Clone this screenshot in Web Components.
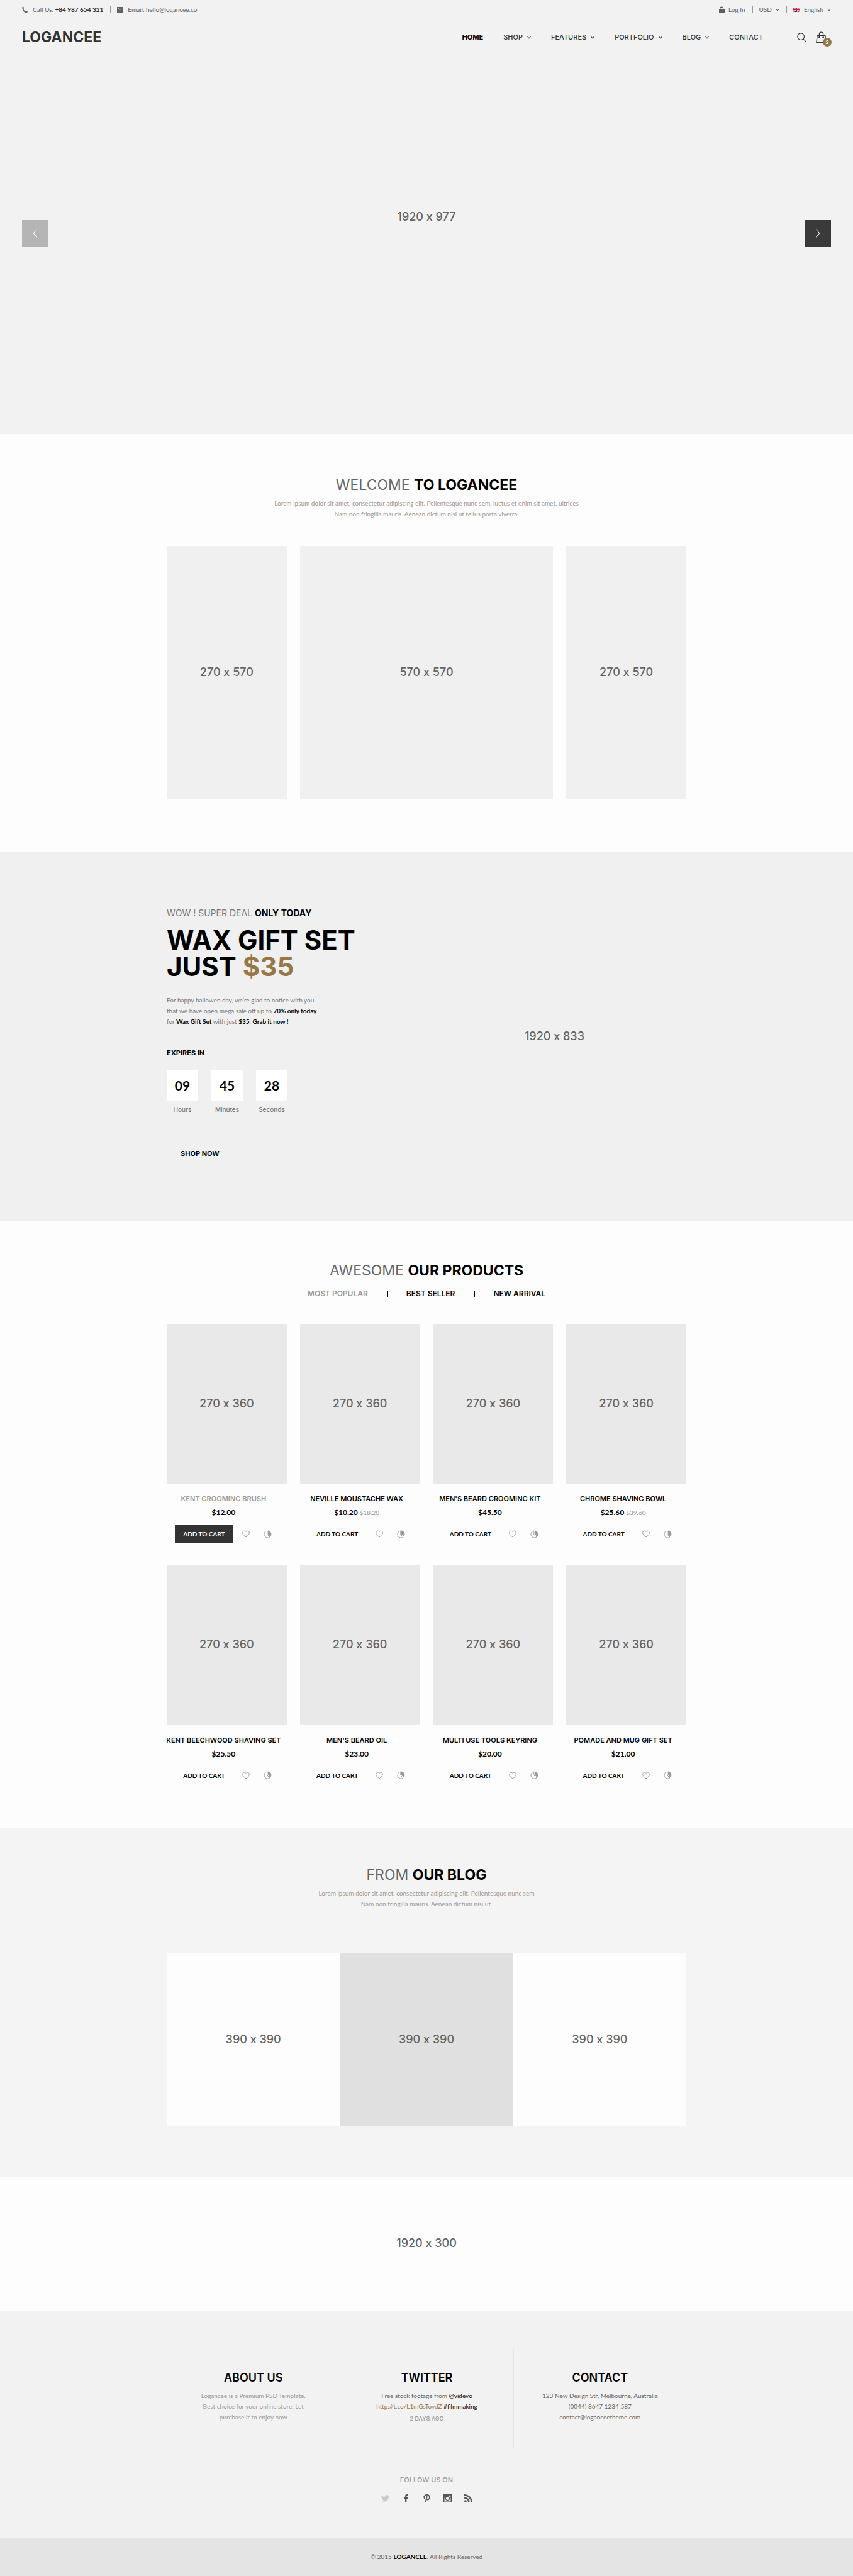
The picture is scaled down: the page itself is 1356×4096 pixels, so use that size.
<!DOCTYPE html>
<html lang="en">
<head>
<meta charset="utf-8">
<title>Logancee</title>
<meta name="viewport" content="width=device-width, initial-scale=1">
<style>
:root{
  --display:Inter,"Liberation Sans",sans-serif;
  --body:Lato,"Liberation Sans",sans-serif;
  --ink:#000;--dark:#333;--mid:#666;--soft:#999;--gold:#967848;
  --wrap:826px;
}
body{margin:0;min-height:100vh;display:flex;flex-direction:column;background:#fdfdfd;font:10px/17px var(--body);color:var(--mid)}
</style>
</head>
<body>
<top-stage></top-stage>

<page-section style="--top:67px;--bottom:83px">
  <section-heading slot="head" lead="Welcome" strong="to Logancee">
    Lorem ipsum dolor sit amet, consectetur adipiscing elit. Pellentesque nunc sem, luctus et enim sit amet, ultrices<br>
    Nam non fringilla mauris. Aenean dictum nisi ut tellus porta viverra.
  </section-heading>
  <tile-row style="--cols:9fr 19fr 9fr;--gap:21px;--space:42px">
    <image-box ratio="270/570">270 x 570</image-box>
    <image-box ratio="570/570">570 x 570</image-box>
    <image-box ratio="270/570">270 x 570</image-box>
  </tile-row>
</page-section>

<deal-banner></deal-banner>

<page-section style="--top:64px;--bottom:69px">
  <section-heading slot="head" lead="Awesome" strong="our products"></section-heading>
  <product-tabs slot="head"></product-tabs>
  <tile-row style="--cols:repeat(4,1fr);--gap:35px 21px;--space:40px">
    <product-card name="Kent grooming brush" price="$12.00" active></product-card>
    <product-card name="Neville moustache wax" price="$10.20" old="$18.20"></product-card>
    <product-card name="Men's beard grooming kit" price="$45.50"></product-card>
    <product-card name="Chrome shaving bowl" price="$25.60" old="$39.60"></product-card>
    <product-card name="Kent beechwood shaving set" price="$25.50"></product-card>
    <product-card name="Men's beard oil" price="$23.00"></product-card>
    <product-card name="Multi use tools keyring" price="$20.00"></product-card>
    <product-card name="Pomade and mug gift set" price="$21.00"></product-card>
  </tile-row>
</page-section>

<page-section style="--top:61px;--bottom:80px;--bg:#f4f4f4">
  <section-heading slot="head" lead="From" strong="our blog">
    Lorem ipsum dolor sit amet, consectetur adipiscing elit. Pellentesque nunc sem<br>
    Nam non fringilla mauris. Aenean dictum nisi ut.
  </section-heading>
  <tile-row style="--cols:repeat(3,1fr);--gap:0;--space:70px">
    <image-box ratio="1/1" style="--fill:#fdfdfd">390 x 390</image-box>
    <image-box ratio="1/1" style="--fill:#e0e0e0">390 x 390</image-box>
    <image-box ratio="1/1" style="--fill:#fdfdfd">390 x 390</image-box>
  </tile-row>
</page-section>

<image-box ratio="1356/213" style="--fill:#fdfdfd">1920 x 300</image-box>

<site-footer></site-footer>

<script>
const BASE = `
  *{box-sizing:border-box}
  h1,h2,h3,p,ul{margin:0;padding:0;font:inherit}
  ul{list-style:none}
  a{color:inherit;text-decoration:none}
  b{font-weight:700;color:var(--ink)}
  button{border:0;background:none;padding:0;font:inherit;color:inherit;cursor:pointer}
`;
function define(tag, css, html){
  customElements.define(tag, class extends HTMLElement{
    constructor(){ super(); this.attachShadow({mode:'open'}); }
    connectedCallback(){
      const body = typeof html === 'function' ? html(this) : html;
      this.shadowRoot.innerHTML = `<style>${BASE}${css}</style>${body}`;
    }
  });
}

const ICONS = {
  phone:['0 0 20 24','<path fill="currentColor" d="M1 2.5C1 2 4 .5 4.800 1.200L7.200 6c.3.700-1.900 2.200-2 3 .3 3 4.600 8 7.800 8.800.8 0 2-2.600 2.900-2.400l3.600 2.400c.6.700-1.200 4.600-2 4.900C9.500 24.500-.4 13 1 2.500z"/>'],
  mail:['0 0 20 20','<path fill="currentColor" d="M0 0h20v20H0z"/><path fill="none" stroke="#f2f2f2" stroke-width="1.800" d="M3 3l7 8 7-8"/>'],
  lock:['0 0 18 20','<path fill="currentColor" d="M0 9h18v11H0z"/><path fill="none" stroke="currentColor" stroke-width="2.600" d="M3.500 10V6.500a5 5 0 0 1 10 0"/>'],
  down:['0 0 10 8','<path fill="none" stroke="currentColor" stroke-width="1.700" d="M.8 1.500L5 6.300l4.200-4.800"/>'],
  left:['0 0 10 18','<path fill="none" stroke="currentColor" stroke-width="1.300" d="M8.500 1L1.500 9l7 8"/>'],
  right:['0 0 10 18','<path fill="none" stroke="currentColor" stroke-width="1.300" d="M1.500 1l7 8-7 8"/>'],
  search:['0 0 22 22','<g fill="none" stroke="currentColor" stroke-width="1.700"><circle cx="9" cy="9" r="7.800"/><path d="M14.500 14.500L21 21"/></g>'],
  bag:['0 0 24 26','<g fill="none" stroke="currentColor" stroke-width="1.900"><path d="M2.800 9.500h18.400L23 25H1z"/><path d="M7.500 13.500V6a4.500 4.500 0 0 1 9 0v7.500"/></g><circle cx="7.500" cy="13.500" r="1.700" fill="currentColor"/><circle cx="16.500" cy="13.500" r="1.700" fill="currentColor"/>'],
  flag:['0 0 16 10','<path fill="#1c2360" d="M0 0h16v10H0z"/><path stroke="#fff" stroke-width="2.200" d="M0 0l16 10M16 0L0 10"/><path stroke="#d0143c" stroke-width=".9" d="M0 0l16 10M16 0L0 10"/><path stroke="#fff" stroke-width="3.600" d="M8 0v10M0 5h16"/><path stroke="#d0143c" stroke-width="2" d="M8 0v10M0 5h16"/>'],
  heart:['0 0 18 17','<path fill="none" stroke="currentColor" stroke-width="1.500" d="M9 3.200C7.400.2 1 .2 1 6c0 4.300 4.500 7.200 8 9.900 3.500-2.700 8-5.600 8-9.900 0-5.800-6.400-5.800-8-2.800z"/>'],
  pie:['0 0 20 20','<path fill="currentColor" d="M10.800.8a9.200 9.200 0 0 1 6 15.100L10.800 10z"/><path fill="none" stroke="currentColor" stroke-width="1.500" d="M9 1.500a8.600 8.600 0 1 0 6.300 15.300L9 10.700z"/>'],
  twitter:['0 0 24 20','<path fill="currentColor" d="M24 2.400a9.800 9.800 0 0 1-2.800.8A5 5 0 0 0 23.300.5a9.900 9.900 0 0 1-3.100 1.200 4.900 4.900 0 0 0-8.400 4.500A14 14 0 0 1 1.700 1a4.900 4.900 0 0 0 1.500 6.600A4.900 4.900 0 0 1 1 7v.1a4.900 4.900 0 0 0 3.900 4.800 5 5 0 0 1-2.200.1 4.900 4.900 0 0 0 4.600 3.400A9.900 9.900 0 0 1 0 17.500 14 14 0 0 0 21.500 5z"/>'],
  facebook:['0 0 24 24','<path fill="currentColor" d="M18 .3V4.600h-2.400c-1.500 0-2 .7-2 2V9h4.300l-.6 4h-3.700v11H9.200V13H6V9h3.200V6C9.200 2 11.500 0 15 0c1.400 0 2.500.1 3 .3z"/>'],
  pinterest:['0 0 24 24','<path fill="none" stroke="currentColor" stroke-width="3.200" stroke-linecap="round" d="M6 13C1.500 7.500 6 1.600 12.500 1.600c5 0 8 3.400 7.500 7.600-.5 4.800-3.600 7.300-6.500 6.800-1.600-.3-2.500-1.400-2.700-2.300M12.500 7L8.200 22.500"/>'],
  instagram:['0 0 24 24','<path fill="currentColor" fill-rule="evenodd" d="M0 0h24v24H0zM15.500 3v5h5V3zM2.800 10v11h18.400V10h-2.400a7 7 0 1 1-13.600 0zM12 7.400a4.600 4.600 0 1 0 0 9.200 4.600 4.600 0 0 0 0-9.200z"/>'],
  rss:['0 0 24 24','<g fill="none" stroke="currentColor" stroke-width="4.600"><path d="M0 10.300A13.500 13.500 0 0 1 13.700 24M0 2.400A21.600 21.600 0 0 1 21.600 24"/></g><circle cx="3.500" cy="20.500" r="3.500" fill="currentColor"/>']
};
define('ui-icon', `:host{display:inline-flex;flex:none}svg{display:block;width:100%;height:100%}`,
  el => { const [box,art] = ICONS[el.getAttribute('name')]; return `<svg viewBox="${box}" aria-hidden="true">${art}</svg>`; });

define('image-box', `
  :host{display:flex;align-items:center;justify-content:center;background:var(--fill,#f0f0f0);color:#646464;font:500 18px/24px var(--display);font-feature-settings:"calt" 0}
`, el => { el.style.aspectRatio = el.getAttribute('ratio'); return `<slot></slot>`; });

define('page-section', `
  :host{display:block;background:var(--bg,#fdfdfd);padding:var(--top) 24px var(--bottom)}
  .wrap{max-width:var(--wrap);margin:0 auto}
`, `<div class="wrap"><slot name="head"></slot><slot></slot></div>`);

define('tile-row', `:host{display:grid;grid-template-columns:var(--cols);gap:var(--gap);margin-top:var(--space)}`, `<slot></slot>`);

define('section-heading', `
  :host{display:block;text-align:center;color:var(--soft)}
  h2{font:400 23px/28px var(--display);color:var(--mid);text-transform:uppercase}
  p{margin-top:7px}
`, el => `<h2>${el.getAttribute('lead')} <b>${el.getAttribute('strong')}</b></h2>${el.textContent.trim() ? '<p><slot></slot></p>' : ''}`);

define('site-header', `
  :host{display:block;padding:0 35px;color:#606060}
  .bar,.main,.group,nav,ul,li a,label{display:flex;align-items:center}
  .bar{justify-content:space-between;height:31px;border-bottom:1px solid #ccc;line-height:16px}
  .group>*+*{margin-left:11px;padding-left:11px;position:relative}
  .group>*+*::before{content:"";position:absolute;left:0;top:3px;bottom:3px;border-left:1px solid #999}
  .item{display:flex;align-items:center;gap:8px}
  .tight{gap:6px}
  .item b{color:var(--dark)}
  select{appearance:none;border:0;background:none;padding:0;margin:0;font:inherit;color:inherit;field-sizing:content}
  .phone{width:9px;height:11px}.mail{width:9px;height:9px}.lock{width:9px;height:11px}.flag{width:11px;height:7px}
  .down{width:6px;height:5px}
  .main{height:56px}
  .logo{font:700 23px/28px var(--display);color:var(--dark)}
  nav{margin-left:auto;font:500 11px/16px var(--display);color:var(--dark)}
  ul{gap:32px}
  li a{gap:7px}
  li a[aria-current]{font-weight:700;color:var(--ink)}
  .tools{display:flex;align-items:center;gap:15px;margin:0 7px 0 54px;color:var(--dark)}
  .search ui-icon{width:15px;height:15px}
  .bag{position:relative}
  .bag>ui-icon{width:17px;height:18px}
  .search,.bag{display:flex}
  .count{position:absolute;right:-8px;bottom:-6px;width:14px;height:14px;border-radius:50%;background:var(--gold);color:#fff;font:700 8px/14px var(--body);text-align:center}
`, `
  <div class="bar">
    <div class="group">
      <span class="item"><ui-icon class="phone" name="phone"></ui-icon><span>Call Us: <b>+84 987 654 321</b></span></span>
      <span class="item"><ui-icon class="mail" name="mail"></ui-icon><a href="#mail">Email: hello@logancee.co</a></span>
    </div>
    <div class="group">
      <a class="item tight" href="#login"><ui-icon class="lock" name="lock"></ui-icon>Log In</a>
      <label class="item tight"><select aria-label="Currency"><option>USD</option></select><ui-icon class="down" name="down"></ui-icon></label>
      <label class="item tight"><ui-icon class="flag" name="flag"></ui-icon><select aria-label="Language"><option>English</option></select><ui-icon class="down" name="down"></ui-icon></label>
    </div>
  </div>
  <div class="main">
    <a class="logo" href="#">LOGANCEE</a>
    <nav aria-label="Main"><ul>
      <li><a href="#" aria-current="page">HOME</a></li>
      ${['SHOP','FEATURES','PORTFOLIO','BLOG'].map(t=>`<li><a href="#">${t}<ui-icon class="down" name="down"></ui-icon></a></li>`).join('')}
      <li><a href="#">CONTACT</a></li>
    </ul></nav>
    <div class="tools">
      <button class="search" aria-label="Search"><ui-icon name="search"></ui-icon></button>
      <button class="bag" aria-label="Cart"><ui-icon name="bag"></ui-icon><span class="count">2</span></button>
    </div>
  </div>
`);

define('top-stage', `
  :host{display:grid;background:#f2f2f2}
  :host>*{grid-area:1/1}
  image-box,.arrows,site-header{grid-area:1/1}
  image-box{--fill:#f2f2f2}
  .arrows{display:flex;justify-content:space-between;align-items:center;padding:52px 35px 0}
  .arrows button{display:flex;align-items:center;justify-content:center;width:42px;height:42px;color:#fff;background:#3a3a3a}
  .arrows .prev{background:#b5b5b5}
  .arrows ui-icon{width:8px;height:14px}
  site-header{align-self:start}
`, `
  <image-box ratio="1920/977">1920 x 977</image-box>
  <div class="arrows">
    <button class="prev" aria-label="Previous"><ui-icon name="left"></ui-icon></button>
    <button aria-label="Next"><ui-icon name="right"></ui-icon></button>
  </div>
  <site-header></site-header>
`);

define('deal-banner', `
  :host{display:grid;background:#f0f0f0}
  image-box,.wrap{grid-area:1/1}
  image-box{padding-left:30%}
  .wrap{width:100%;max-width:var(--wrap);margin:0 auto;padding-top:89px;display:flex;flex-direction:column;align-items:flex-start;color:#777}
  .sub{font:400 14px/18px var(--display)}
  h2{font:700 42px/42px var(--display);color:var(--ink);margin-top:13px}
  h2 em{font-style:normal;color:var(--gold)}
  .copy{margin-top:24px}
  h3,button{font:700 11px/16px var(--display);color:var(--ink)}
  h3{margin-top:33px}
  ul{display:flex;gap:21px;margin-top:19px}
  li{width:50px;display:flex;flex-direction:column;align-items:center;gap:6px;font:500 10px/16px var(--display)}
  .num{align-self:stretch;text-align:center;background:#fff;color:var(--ink);font:700 21px/49px var(--body)}
  button{margin-top:48px;padding:6px 22px}
`, `
  <image-box ratio="1920/833">1920 x 833</image-box>
  <div class="wrap">
    <p class="sub">WOW ! SUPER DEAL <b>ONLY TODAY</b></p>
    <h2>WAX GIFT SET<br>JUST <em>$35</em></h2>
    <p class="copy">For happy hallowen day, we’re glad to notice with you<br>that we have open mega sale off up to <b>70% only today</b><br>for <b>Wax Gift Set</b> with just <b>$35</b>. <b>Grab it now !</b></p>
    <h3>EXPIRES IN</h3>
    <ul><li><span class="num">09</span>Hours</li><li><span class="num">45</span>Minutes</li><li><span class="num">28</span>Seconds</li></ul>
    <button>SHOP NOW</button>
  </div>
`);

define('product-tabs', `
  :host{display:flex;justify-content:center;align-items:center;margin-top:15px;font:600 12px/16px var(--display);color:var(--ink)}
  button+button{margin-left:31px;padding-left:30px;position:relative}
  button+button::before{content:"";position:absolute;left:0;top:3px;bottom:2px;border-left:1px solid #000}
  [aria-selected=true]{color:var(--soft)}
`, `<button role="tab" aria-selected="true">MOST POPULAR</button><button role="tab">BEST SELLER</button><button role="tab">NEW ARRIVAL</button>`);

define('product-card', `
  :host{display:block;text-align:center}
  image-box{--fill:#e9e9e9}
  .info{padding-right:10px}
  h3{margin:16px -10px 0;white-space:nowrap;font:600 11px/16px var(--display);color:var(--ink);text-transform:uppercase}
  .price{margin-top:5px;font:700 12px/18px var(--body);color:var(--ink)}
  del{font-weight:400;font-size:10px;color:var(--soft)}
  .actions{display:flex;justify-content:center;align-items:center;margin-top:11px;color:#999}
  .cart{width:92px;height:28px;font:700 10px/28px var(--body);color:var(--ink)}
  .round{display:flex}
  .heart{margin-left:15px;width:12px;height:12px}
  .pie{margin-left:22px;width:13px;height:13px}
  :host([active]) h3{color:var(--soft)}
  :host([active]) .cart{background:#333;color:#fff}
`, el => `
  <image-box ratio="270/360">270 x 360</image-box>
  <div class="info">
    <h3>${el.getAttribute('name')}</h3>
    <p class="price">${el.getAttribute('price')}${el.hasAttribute('old') ? ` <del>${el.getAttribute('old')}</del>` : ''}</p>
    <div class="actions">
      <button class="cart">ADD TO CART</button>
      <button class="round" aria-label="Add to wishlist"><ui-icon class="heart" name="heart"></ui-icon></button>
      <button class="round" aria-label="Compare"><ui-icon class="pie" name="pie"></ui-icon></button>
    </div>
  </div>
`);

define('site-footer', `
  :host{display:flex;flex-direction:column;flex:1;background:#f2f2f2;text-align:center;padding-top:60px}
  .cols{display:grid;grid-template-columns:repeat(3,1fr);width:100%;max-width:var(--wrap);margin:0 auto;min-height:158px}
  section{padding-top:35px}
  section+section{border-left:1px solid #e6e6e6}
  h3{font:600 18px/24px var(--display);color:var(--ink);margin-bottom:8px}
  .about{color:var(--soft)}
  .link{color:var(--gold)}
  .handle{color:var(--ink)}
  .ago{margin-top:2px;font:500 9px/17px var(--display);color:var(--soft)}
  .follow{margin-top:43px;font:500 11px/16px var(--display);color:var(--soft)}
  ul{display:flex;justify-content:center;gap:20px;margin:15px 0 57px;color:#555}
  li a{display:flex}
  li ui-icon{width:13px;height:13px}
  li:first-child{color:#c8c8c8}
  .legal{flex:1;display:flex;align-items:center;justify-content:center;min-height:58px;background:#e4e4e4}
`, `
  <div class="cols">
    <section class="about"><h3>ABOUT US</h3><p>Logancee is a Premium PSD Template.<br>Best choice for your online store. Let<br>purchase it to enjoy now</p></section>
    <section><h3>TWITTER</h3><p>Free stock footage from <a class="handle" href="#">@videvo</a><br><a class="link" href="#">http://t.co/L1mGsTovdZ</a> <a class="handle" href="#">#filmmaking</a></p><p class="ago">2 DAYS AGO</p></section>
    <section><h3>CONTACT</h3><p>123 New Design Str, Melbourne, Australia<br>(0044) 8647 1234 587<br><a href="#">contact@loganceetheme.com</a></p></section>
  </div>
  <p class="follow">FOLLOW US ON</p>
  <ul>${['twitter','facebook','pinterest','instagram','rss'].map(n=>`<li><a href="#" aria-label="${n}"><ui-icon name="${n}"></ui-icon></a></li>`).join('')}</ul>
  <div class="legal"><p>© 2015 <b>LOGANCEE</b>. All Rights Reserved</p></div>
`);
</script>
</body>
</html>
